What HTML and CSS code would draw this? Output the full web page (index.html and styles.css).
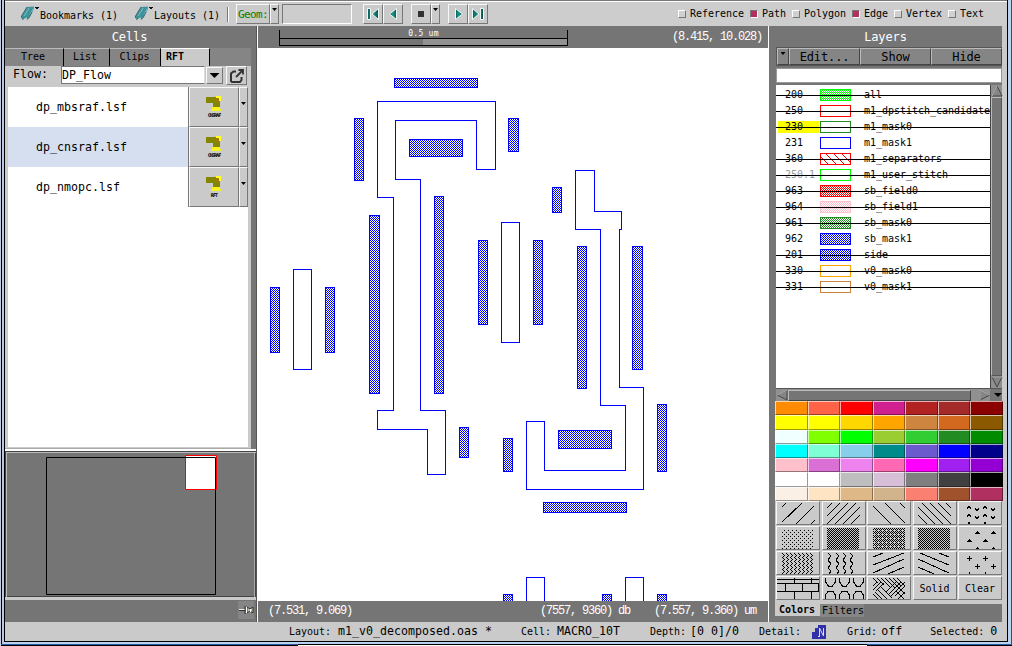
FILE: index.html
```html
<!DOCTYPE html>
<html lang="en">
<head>
<meta charset="utf-8">
<title>Layout viewer</title>
<link rel="stylesheet" href="styles.css">
</head>
<body>
<svg class="defs" width="0" height="0">
  <defs>
    <symbol id="bookmark" viewBox="0 0 18 16">
      <path d="M0.500 13V11L6 2L13 1.500L12.500 5L8 13L6 15V12.500L3 13.500L1.500 15Z" fill="#3f949c"/>
      <path d="M3 11L8 3M9 10L12 4" stroke="#7fbcc8" fill="none"/>
      <path d="M.5 13V11L6 2M1.500 14.500L3.500 13M6 14.500L8.500 12L11 7" stroke="#2f5565" stroke-width=".8" fill="none"/>
      <path d="M14 2h4v1h-1v1h-2v-1h-1z" fill="#111"/>
    </symbol>
    <linearGradient id="teal" x1="0" x2="1"><stop stop-color="#075d5a"/><stop offset=".5" stop-color="#209b8e"/><stop offset="1" stop-color="#064c4a"/></linearGradient>
    <symbol id="gun" viewBox="0 0 20 18">
      <path d="M2 1H16V11H9V7H2Z" fill="#858500"/>
      <path d="M12 2H16V5H12Z" fill="#a87800"/>
      <path d="M12 0H17V5H15V2H12Z" fill="#ffff28"/>
      <path d="M8 11H16V13H17V15H7V13H8Z" fill="#f6f220"/>
    </symbol>
    <pattern id="hatch" width="2" height="2" patternUnits="userSpaceOnUse"><path d="M0 0h1v1H0zM1 1h1v1H1z" fill="#00f"/></pattern>
    <pattern id="dots" width="8" height="4" patternUnits="userSpaceOnUse"><path d="M1 0h1v1H1zM5 0h1v1H5zM3 2h1v1H3zM7 2h1v1H7z"/></pattern>
    <pattern id="check" width="2" height="2" patternUnits="userSpaceOnUse"><path d="M0 0h1v1H0zM1 1h1v1H1z"/></pattern>
    <pattern id="mesh" width="4" height="4" patternUnits="userSpaceOnUse"><path d="M0 0h1v1H0zM2 0h1v1H2zM1 1h1v1H1zM3 1h1v1H3zM0 2h1v1H0zM1 3h1v1H1zM3 3h1v1H3z"/></pattern>
    <pattern id="zig" width="4" height="4" patternUnits="userSpaceOnUse"><path d="M1 0h1v1H1zM2 1h1v1H2zM3 2h1v1H3zM2 3h1v1H2z"/></pattern>
  </defs>
</svg>
<div class="frame">
<div class="window">
  <header class="toolbar">
    <svg class="bm" width="18" height="16"><use href="#bookmark"/></svg><span class="t6 bmtext">Bookmarks (1)</span>
    <svg class="bm second" width="18" height="16"><use href="#bookmark"/></svg><span class="t6 bmtext">Layouts (1)</span>
    <i class="sep"></i>
    <span class="btn geom">Geom:</span><span class="btn drop"><i class="arr"></i></span>
    <span class="entry"></span>
    <span class="btn nav first"><svg width="16" height="16"><path d="M2.500 2.500h3v11h-3zM13.500 2.500v11L7 8z" fill="url(#teal)" stroke="#eef8f5"/></svg></span>
    <span class="btn nav"><svg width="16" height="16"><path d="M11.500 2.500v11L4.500 8z" fill="url(#teal)" stroke="#eef8f5"/></svg></span>
    <span class="btn nav gap"><svg width="16" height="16"><path d="M5 5h6v6H5z" fill="#303030"/></svg></span><span class="btn drop"><i class="arr"></i></span>
    <span class="btn nav gap"><svg width="16" height="16"><path d="M5.500 2.500v11L12.500 8z" fill="url(#teal)" stroke="#eef8f5"/></svg></span>
    <span class="btn nav"><svg width="16" height="16"><path d="M2.500 2.500v11L9 8zM10.500 2.500h3v11h-3z" fill="url(#teal)" stroke="#eef8f5"/></svg></span>
    <div class="filters t6">
      <label><i class="box"></i>Reference</label><label><i class="box on"></i>Path</label><label><i class="box"></i>Polygon</label><label><i class="box on"></i>Edge</label><label><i class="box"></i>Vertex</label><label><i class="box"></i>Text</label>
    </div>
  </header>

  <main class="body">
    <section class="left">
      <h2 class="title">Cells</h2>
      <nav class="tabs t6"><span class="tab tree">Tree</span><span class="tab list">List</span><span class="tab clips">Clips</span><span class="tab rft">RFT</span></nav>
      <div class="cells">
        <div class="flow t7"><span class="flowlabel">Flow:</span><span class="flowinput">DP_Flow</span><span class="btn flowdrop"><i class="arr big"></i></span><span class="btn export"><svg width="18" height="16"><path d="M8 3.500H5.500L3 5.500V13L4 14H12L13.500 12V9" fill="none" stroke="#333" stroke-width="2"/><path d="M8 9L14.500 2.500M10.500 2H15V6.500" fill="none" stroke="#333" stroke-width="1.800"/></svg></span></div>
        <div class="files t7">
          <div class="file"><span class="name">dp_mbsraf.lsf</span><span class="btn run"><svg width="20" height="18"><use href="#gun"/></svg><b>CNSRAF</b></span><span class="btn more"><i class="arr"></i></span></div>
          <div class="file sel"><span class="name">dp_cnsraf.lsf</span><span class="btn run"><svg width="20" height="18"><use href="#gun"/></svg><b>CNSRAF</b></span><span class="btn more"><i class="arr"></i></span></div>
          <div class="file"><span class="name">dp_nmopc.lsf</span><span class="btn run"><svg width="20" height="18"><use href="#gun"/></svg><b>RFT</b></span><span class="btn more"><i class="arr"></i></span></div>
        </div>
      </div>
      <div class="overview">
        <svg width="247" height="143" viewBox="7 454 247 143"><path d="M185.500 455.500h31v34h-31z" fill="#fff" stroke="red"/><path d="M46.500 457.500h169v137h-169z" fill="none" stroke="#000"/></svg>
      </div>
      <div class="pinbar"><svg width="16" height="18"><rect width="16" height="18" fill="#858585"/><path d="M1 8.500h6" stroke="#eee"/><path d="M1 9.500h6M7 5v8M9 6l3 2 3-2v6l-3-2-3 2z" stroke="#333" fill="#c8c4ac"/><path d="M8.500 6v6M12.500 8v3" stroke="#fff"/></svg></div>
    </section>

    <section class="center">
      <div class="ruler">
        <div class="scale"><span>0.5 um</span><i class="seg"></i></div>
        <span class="coord">(8.415, 10.028)</span>
      </div>
      <svg class="canvas" width="510" height="553" viewBox="258 48 510 553" shape-rendering="crispEdges">
        <g fill="url(#hatch)" stroke="#00f">
          <rect x="394.500" y="78.500" width="83" height="9"/><rect x="354.500" y="118.500" width="9" height="62"/>
          <rect x="508.500" y="118.500" width="10" height="33"/><rect x="409.500" y="139.500" width="53" height="17"/>
          <rect x="369.500" y="215.500" width="10" height="178"/><rect x="434.500" y="196.500" width="9" height="197"/>
          <rect x="478.500" y="240.500" width="9" height="84"/><rect x="533.500" y="240.500" width="9" height="84"/>
          <rect x="270.500" y="287.500" width="9" height="65"/><rect x="325.500" y="287.500" width="9" height="65"/>
          <rect x="552.500" y="187.500" width="9" height="25"/><rect x="577.500" y="246.500" width="9" height="142"/>
          <rect x="632.500" y="246.500" width="10" height="123"/><rect x="459.500" y="427.500" width="9" height="30"/>
          <rect x="503.500" y="438.500" width="9" height="33"/><rect x="558.500" y="430.500" width="53" height="18"/>
          <rect x="657.500" y="404.500" width="9" height="67"/><rect x="543.500" y="502.500" width="83" height="10"/>
          <rect x="503.500" y="594.500" width="9" height="20"/><rect x="602.500" y="594.500" width="9" height="20"/><rect x="657.500" y="594.500" width="9" height="20"/>
        </g>
        <g fill="none" stroke="#00f">
          <path d="M377.500 101.500H495.500V169.500H476.500V120.500H395.500V179.500H420.500V410.500H445.500V474.500H427.500V429.500H377.500V410.500H393.500V197.500H377.500Z"/>
          <path d="M575.500 170.500H594.500V211.500H621.500V229.500H619.500V387.500H643.500V489.500H526.500V421.500H544.500V470.500H625.500V405.500H600.500V229.500H575.500Z"/>
          <path d="M293.500 269.500h18v100h-18zM501.500 222.500h18v120h-18zM526.500 610V577.500h18V610M625.500 610V577.500h18V610"/>
        </g>
      </svg>
      <div class="readout"><span class="coord">(7.531, 9.069)</span><span class="coord db">(7557, 9360) db</span><span class="coord um">(7.557, 9.360) um</span></div>
    </section>

    <section class="right">
      <h2 class="title">Layers</h2>
      <div class="actions t7"><span class="dbtn"><i class="arr"></i></span><span class="dbtn">Edit...</span><span class="dbtn">Show</span><span class="dbtn">Hide</span></div>
      <div class="search"></div>
      <div class="layerbox">
        <div class="layers t6">
          <div class="layer off"><span class="num">200</span><i class="sw lime fill"></i><span>all</span></div>
          <div class="layer off"><span class="num">250</span><i class="sw red"></i><span>m1_dpstitch_candidate</span></div>
          <div class="layer off"><span class="num current">230</span><i class="sw green"></i><span>m1_mask0</span></div>
          <div class="layer"><span class="num">231</span><i class="sw blue"></i><span>m1_mask1</span></div>
          <div class="layer off"><span class="num">360</span><i class="sw red diag"></i><span>m1_separators</span></div>
          <div class="layer off"><span class="num dim">250.1</span><i class="sw lime"></i><span>m1_user_stitch</span></div>
          <div class="layer off"><span class="num">963</span><i class="sw red fill"></i><span>sb_field0</span></div>
          <div class="layer off"><span class="num">964</span><i class="sw pink fill"></i><span>sb_field1</span></div>
          <div class="layer off"><span class="num">961</span><i class="sw green fill"></i><span>sb_mask0</span></div>
          <div class="layer"><span class="num">962</span><i class="sw blue fill"></i><span>sb_mask1</span></div>
          <div class="layer off"><span class="num">201</span><i class="sw blue fill"></i><span>side</span></div>
          <div class="layer off"><span class="num">330</span><i class="sw orange"></i><span>v0_mask0</span></div>
          <div class="layer off"><span class="num">331</span><i class="sw peru"></i><span>v0_mask1</span></div>
        </div>
        <div class="vscroll"><svg width="12" height="12"><path d="M6 1L1 11H11Z" fill="#858585" stroke="#444"/><path d="M6 1L1 11" stroke="#bbb"/></svg><i class="vthumb"></i><svg width="12" height="12"><path d="M6 11L1 1H11Z" fill="#858585" stroke="#444"/><path d="M1 1H11" stroke="#bbb"/></svg></div>
      </div>
      <div class="hscroll"><svg width="12" height="12"><path d="M1 6L11 1V11Z" fill="#858585" stroke="#444"/><path d="M1 6L11 1" stroke="#bbb"/></svg><i class="hthumb"></i><svg width="12" height="12"><path d="M11 6L1 1V11Z" fill="#858585" stroke="#444"/><path d="M11 6L1 1V11" stroke="#bbb" fill="none"/></svg><i class="arr menu"></i></div>
      <div class="palette">
        <i style="background:#ff8c00"></i><i style="background:#ff6347"></i><i style="background:#f00"></i><i style="background:#d02090"></i><i style="background:#b22222"></i><i style="background:#a52a2a"></i><i style="background:#8b0000"></i>
        <i style="background:#ff0"></i><i style="background:#ff0"></i><i style="background:#ffd700"></i><i style="background:#ffa500"></i><i style="background:#cd853f"></i><i style="background:#d2691e"></i><i style="background:#8b5a00"></i>
        <i style="background:#f0ffff"></i><i style="background:#7fff00"></i><i style="background:#0f0"></i><i style="background:#9acd32"></i><i style="background:#32cd32"></i><i style="background:#228b22"></i><i style="background:#008b00"></i>
        <i style="background:#0ff"></i><i style="background:#7fffd4"></i><i style="background:#87ceeb"></i><i style="background:#008b8b"></i><i style="background:#6a5acd"></i><i style="background:#00f"></i><i style="background:#00008b"></i>
        <i style="background:#ffc0cb"></i><i style="background:#da70d6"></i><i style="background:#ee82ee"></i><i style="background:#ff69b4"></i><i style="background:#f0f"></i><i style="background:#a020f0"></i><i style="background:#9400d3"></i>
        <i style="background:#fff"></i><i style="background:#fff"></i><i style="background:#bebebe"></i><i style="background:#d8bfd8"></i><i style="background:#7f7f7f"></i><i style="background:#404040"></i><i style="background:#000"></i>
        <i style="background:#faf0e6"></i><i style="background:#ffe4c4"></i><i style="background:#deb887"></i><i style="background:#d2b48c"></i><i style="background:#fa8072"></i><i style="background:#a0522d"></i><i style="background:#b03060"></i>
      </div>
      <div class="patterns t6">
        <span class="btn"><svg viewBox="0 0 42 21"><path d="M5 19L25 0M19 21L37 3M5 4L9 0M34 21L38 17"/></svg></span>
        <span class="btn"><svg viewBox="0 0 42 21"><path d="M4 5L9 0M4 13L17 0M4 21L25 0M12 21L33 0M20 21L37 4M28 21L37 12"/></svg></span>
        <span class="btn"><svg viewBox="0 0 42 21"><path d="M5 3L23 21M17 0L37 20M32 0L37 5"/></svg></span>
        <span class="btn"><svg viewBox="0 0 42 21"><path d="M4 12L13 21M4 4L21 21M8 0L29 21M16 0L37 21M24 0L37 13M32 0L37 5"/></svg></span>
        <span class="btn"><svg viewBox="0 0 42 21"><path d="M8 6l2-3 2 3M24 6l2-3 2 3M16 5l2 3 2-3M32 5l2 3 2-3M8 14l2-3 2 3M24 14l2-3 2 3M16 13l2 3 2-3M32 13l2 3 2-3M9 21l1-2 1 2M25 21l1-2 1 2"/></svg></span>
        <span class="btn"><svg viewBox="0 0 42 21"><path class="solid" fill="url(#dots)" d="M5 1h32v20H5z"/></svg></span>
        <span class="btn"><svg viewBox="0 0 42 21"><path class="solid" fill="url(#check)" d="M4 0h32v21H4z"/></svg></span>
        <span class="btn"><svg viewBox="0 0 42 21"><path class="solid" fill="url(#mesh)" d="M5 0h32v21H5z"/></svg></span>
        <span class="btn"><svg viewBox="0 0 42 21"><path class="solid" fill="url(#check)" d="M4 0h32v21H4z"/></svg></span>
        <span class="btn"><svg viewBox="0 0 42 21"><path class="solid" fill="#000" d="M16 6l2.500-3 2.500 3zM32 6l2.500-3 2.500 3zM8 14l2.500-3 2.500 3zM24 14l2.500-3 2.500 3zM16 21l2.500-2 2.500 2zM32 21l2.500-2 2.500 2z"/></svg></span>
        <span class="btn"><svg viewBox="0 0 42 21"><path class="solid" fill="url(#zig)" d="M5 0h32v21H5z"/></svg></span>
        <span class="btn"><svg viewBox="0 0 42 21"><path d="M5 0l3 3-3 4 3 4-3 4 3 3-2 3M13 0l3 3-3 4 3 4-3 4 3 3-2 3M20 0l3 3-3 4 3 4-3 4 3 3-2 3M27 0l3 3-3 4 3 4-3 4 3 3-2 3"/></svg></span>
        <span class="btn"><svg viewBox="0 0 42 21"><path d="M5 4L15 0M5 12L36 0M5 20L36 6M20 21L36 14"/></svg></span>
        <span class="btn"><svg viewBox="0 0 42 21"><path d="M4 6L35 20M4 14L20 21M6 0L35 12M25 0L35 4"/></svg></span>
        <span class="btn"><svg viewBox="0 0 42 21"><path d="M8 5.500h5M10.500 3v5M24 5.500h5M26.500 3v5M16 13.500h5M18.500 11v5M32 13.500h5M34.500 11v5M10.500 19v2M26.500 19v2"/></svg></span>
        <span class="btn"><svg viewBox="0 0 42 21"><path d="M0 1.500h42M0 5.500h42M0 13.500h42M17.500 0v5M34.500 0v5M8.500 5v8M25.500 5v8M41.500 5v8M17.500 13v8M34.500 13v8"/></svg></span>
        <span class="btn"><svg viewBox="0 0 42 21"><path d="M2.500 0v4l3 4h4l3-4V0M16.500 0v4l3 4h4l3-4V0M30.500 0v4l3 4h4l3-4V0M2.500 21v-4l3-4h4l3 4v4M16.500 21v-4l3-4h4l3 4v4M30.500 21v-4l3-4h4l3 4v4"/></svg></span>
        <span class="btn"><svg viewBox="0 0 42 21"><path d="M5 8l4-4M5 12l8-8M8 13l8-8M5 0l5 5M9 0l7 7M13 0l10 10M17 0l10 10M21 0l6 6M5 16l5 5M7 14l7 7M10 12l9 9M13 9l11 11M18 14l10-10M20 17l13-13M23 18L37 4M27 18l10-10M21 0l10 10M25 0l8 8M29 0l8 8M28 13l8 8M31 10l6 6M30 21l7-7"/></svg></span>
        <span class="btn">Solid</span>
        <span class="btn">Clear</span>
      </div>
      <nav class="lowtabs t6"><span class="colors">Colors</span><span class="filt">Filters</span></nav>
    </section>
  </main>

  <footer class="status t6">
    <span class="pair layout">Layout:<span class="t7 v">m1_v0_decomposed.oas *</span></span>
    <span class="pair cell">Cell:<span class="t7 v">MACRO_10T</span></span>
    <span class="pair depth">Depth:<span class="t7 v">[0 0]/0</span></span>
    <span class="pair detail">Detail:<svg width="14" height="14"><path d="M0 13V7H3V3H6V0H14V14H0Z" fill="#3030a8"/><path d="M7.500 12V3L11.500 11V3M6 11.500h2" fill="none" stroke="#dde"/></svg></span>
    <span class="pair grid">Grid:<span class="t7 v">off</span></span>
    <span class="pair selected">Selected:<span class="t7 v">0</span></span>
  </footer>
</div>
<div class="taskedge"></div>
</div>
</body>
</html>
```
FILE: styles.css
```css
* { box-sizing: border-box; }
body { margin: 0; width: 1012px; height: 646px; overflow: hidden; background: #b7d0ee; color: #000; font-family: "DejaVu Sans Mono", "Liberation Mono", monospace; }
i { display: block; font-style: normal; }
svg { display: block; flex: none; }
.defs { position: absolute; }
.t6 { font-size: 10px; letter-spacing: -0.02px; }
.t7 { font-size: 11.6px; letter-spacing: 0.02px; }

.frame { width: 1012px; height: 646px; border-left: 1px solid #ccd; padding-left: 3px; background: linear-gradient(90deg, #000 0 1px, #b5c8e8 1px 3px, #b9d3ef 3px 1010px, #2452a0 1010px); }
.window { width: 1004px; height: 642px; border: solid #000; border-width: 0 1px 1px 1px; background: #cacaca; }
.taskedge { height: 4px; margin-left: -3px; background: linear-gradient(90deg, #2a5ba8 0 297px, transparent 297px 866px, #2a5ba8 866px) 0 2px / 100% 1px no-repeat, linear-gradient(90deg, #000 0 297px, #fff 297px 866px, #000 866px) 0 3px / 100% 1px no-repeat, linear-gradient(90deg, transparent 0 297px, #000 297px 866px, transparent 866px) 0 2px / 100% 1px no-repeat; }

.btn { display: flex; align-items: center; justify-content: center; background: #cacaca; border: 1px solid; border-color: #f8f8f8 #777 #777 #f8f8f8; flex: none; }
.arr { width: 5px; height: 3px; background: #000; clip-path: polygon(0 0, 100% 0, 50% 100%); flex: none; }
.arr.big { width: 10px; height: 5px; }
.arr.menu { width: 8px; height: 4px; margin-left: 3px; }

.toolbar { display: flex; align-items: center; height: 26px; padding: 2px 0 1px 16px; background: #cdcdcd; border-top: 1px solid #777; box-shadow: inset 0 1px #fff; white-space: nowrap; }
.bm { margin-top: -2px; }
.bm.second { margin-left: 17px; }
.bmtext { margin-left: 1px; margin-top: 2px; }
.sep { width: 2px; height: 15px; margin: 0 7px 0 7px; background: #777; border-right: 1px solid #fff; }
.geom { width: 34px; height: 20px; color: #008000; font-size: 11px; letter-spacing: -.62px; }
.drop { width: 9px; height: 20px; align-items: flex-start; padding-top: 3px; }
.entry { width: 70px; height: 20px; margin-left: 3px; border: 1px solid; border-color: #777 #fff #fff #777; }
.nav { width: 20px; height: 20px; }
.nav.first { margin-left: 11px; }
.nav.gap { margin-left: 8px; }
.filters { display: flex; margin-left: 190px; margin-top: -1px; }
.filters label { display: flex; align-items: center; margin-right: 6px; }
.box { width: 8px; height: 8px; margin-right: 4px; border: 1px solid; border-color: #fff #777 #777 #fff; background: #d0d0d0; }
.box.on { background: #b03060; border-color: #777 #fff #fff #777; }

.body { display: flex; height: 596px; }
.title { margin: 0; height: 21px; font-size: 12px; line-height: 22px; letter-spacing: -.1px; font-weight: normal; color: #fff; text-align: center; background: #757575; }

.left { width: 252px; background: #757575; border-right: 1px solid #555; }
.left .title { width: 249px; }
.tabs { display: flex; height: 18px; width: 246px; background: #858585; align-items: stretch; line-height: 15px; margin-top: 1px; }
.tab { border-top: 1px solid #bbb; border-right: 1px solid #000; text-align: center; background: #858585; }
.tree { width: 59px; padding-right: 2px; }
.list { width: 46px; padding-right: 3px; }
.clips { width: 51px; padding-right: 1px; }
.rft { width: 49px; padding-left: 5px; text-align: left; font-weight: bold; background: #cacaca; border-color: #fff #000 #fff #fff; }
.cells { width: 246px; height: 383px; padding-left: 3px; background: #cacaca; border-bottom: 1px solid #aaa; }
.flow { display: flex; height: 21px; line-height: 17px; }
.flowlabel { width: 53px; padding-left: 5px; }
.flowinput { width: 144px; height: 18px; line-height: 16px; background: #fff; border: 1px solid #777; border-right-color: #ddd; }
.flowdrop { width: 17px; height: 17px; margin: 1px 0 0 1px; }
.export { width: 21px; height: 19px; margin-left: 3px; }
.files { width: 240px; height: 360px; background: #fff; }
.file { display: flex; height: 40px; }
.file .name { width: 181px; padding-left: 28px; line-height: 40px; border-right: 1px solid #777; }
.file.sel .name { background: #d6dff0; }
.run { width: 50px; flex-direction: column; }
.run b { font: bold 5px/5px "DejaVu Sans Mono", monospace; letter-spacing: -.9px; margin-top: -1px; }
.more { width: 9px; align-items: flex-start; padding-top: 14px; }
.overview { height: 151px; padding: 3px 0 0 2px; border-top: 2px solid #fff; border-bottom: 3px solid #cacaca; box-shadow: inset 1px 1px #444, inset 2px 2px #bbb, inset -1px 0 #444, inset -2px 0 #aaa, inset 0 -1px #444; }
.pinbar { display: flex; height: 21px; justify-content: flex-end; padding: 1px 2px 0 0; }

.center { width: 511px; border-left: 1px solid #fff; background: #fff; color: #fff; }
.ruler { display: flex; justify-content: space-between; height: 22px; padding-left: 21px; padding-right: 6px; background: #757575; }
.scale { width: 289px; height: 16px; margin-top: 4px; border: solid #000; border-width: 0 1px 1px; font-size: 8px; line-height: 7px; text-align: center; letter-spacing: .25px; }
.scale span { display: block; height: 8px; }
.seg { height: 7px; border-top: 1px solid #000; background: linear-gradient(90deg, #757575 50%, #929292 50%); }
.coord { font-family: "Liberation Mono", monospace; font-size: 12px; line-height: 23px; letter-spacing: -1.2px; white-space: pre; }
.readout { display: flex; height: 21px; padding-left: 10px; background: #757575; }
.readout .coord { line-height: 21px; }
.db { margin-left: 188px; }
.um { margin-left: 24px; }

.right { width: 238px; padding: 0 4px 0 7px; border-left: 1px solid #fff; background: linear-gradient(90deg, #757575 0 233px, #cacaca 233px); }
.right .title { width: 219px; }
.actions { display: grid; grid-template-columns: 12px 71px 71px 71px; width: 226px; height: 19px; border: 1px solid #555; border-right: 0; }
.dbtn { display: flex; align-items: center; justify-content: center; background: #858585; border: 1px solid; border-color: #bbb #444 #444 #bbb; font-size: 12px; letter-spacing: -.12px; }
.dbtn:first-child { align-items: flex-start; padding-top: 3px; }
.search { width: 226px; height: 15px; margin: 2px 0; background: #fff; border: 1px solid #999; }
.layerbox { display: flex; width: 226px; height: 303px; background: #fff; }
.layers { width: 214px; overflow: hidden; padding-top: 2px; }
.layer { position: relative; display: flex; height: 16px; align-items: center; line-height: 16px; white-space: nowrap; }
.layer.off::after { content: ""; position: absolute; left: 0; right: 0; top: 8px; height: 1px; background: #000; }
.num { width: 41px; margin: 0 1px 0 2px; padding-left: 7px; line-height: 12px; }
.current { background: #ff0; }
.dim { color: #999; }
.sw { width: 31px; height: 12px; margin-right: 13px; border: 1px solid; flex: none; }
.fill { background: conic-gradient(currentColor 25%, transparent 0 50%, currentColor 0 75%, transparent 0) 0 0 / 2px 2px; }
.diag { background: repeating-linear-gradient(45deg, #fff 0 4.6px, currentColor 4.6px 5.6px); }
.lime { color: #0f0; }
.red { color: #f00; }
.green { color: #228b22; }
.blue { color: #00f; }
.pink { color: #ffc0cb; }
.orange { color: #ffa500; }
.peru { color: #cd853f; }
.vscroll { display: flex; flex-direction: column; width: 12px; background: #909090; border-left: 1px solid #444; }
.vthumb { flex: 1; width: 11px; background: #757575; border: 1px solid; border-color: #bbb #555 #555 #bbb; }
.hscroll { display: flex; align-items: center; width: 226px; height: 13px; background: linear-gradient(90deg, #909090 0 214px, #757575 214px); border-top: 1px solid #555; }
.hthumb { width: 183px; height: 11px; background: #757575; border: 1px solid; border-color: #bbb #444 #444 #bbb; margin-right: 8px; }
.palette { display: grid; grid-template: repeat(7, 1fr) / repeat(7, 1fr); width: 228px; height: 100px; margin-left: -1px; background: #cacaca; }
.palette i { border: 1px solid; border-color: rgba(255,255,255,.65) rgba(0,0,0,.4) rgba(0,0,0,.4) rgba(255,255,255,.65); }
.patterns { display: grid; grid-template: repeat(4, 24px) / repeat(5, 44px); gap: 1px 1.5px; width: 228px; height: 103px; margin-left: -1px; padding: 0 1px; background: #cacaca; }
.patterns svg { width: 42px; height: 21px; fill: none; stroke: #000; shape-rendering: crispEdges; }
.patterns .solid { stroke: none; }
.lowtabs { display: flex; align-items: flex-start; width: 228px; height: 17px; margin-left: -1px; line-height: 13px; }
.colors { width: 45px; height: 12px; padding-left: 4px; line-height: 11px; font-weight: bold; background: #cacaca; }
.filt { padding-left: 2px; background: #858585; }

.status { position: relative; display: flex; height: 19px; padding-left: 284px; line-height: 19px; white-space: pre; }
.pair { display: flex; }
.layout .v { margin-left: 7px; }
.cell { margin-left: 29px; }
.cell .v { margin-left: 6px; }
.depth { margin-left: 30px; }
.depth .v { margin-left: 4px; }
.detail { margin-left: 20px; }
.detail svg { margin: 3px 0 0 11px; }
.grid { margin-left: 21px; }
.grid .v { margin-left: 4px; }
.selected { margin-left: 28px; }
.selected .v { margin-left: 6px; }
```
